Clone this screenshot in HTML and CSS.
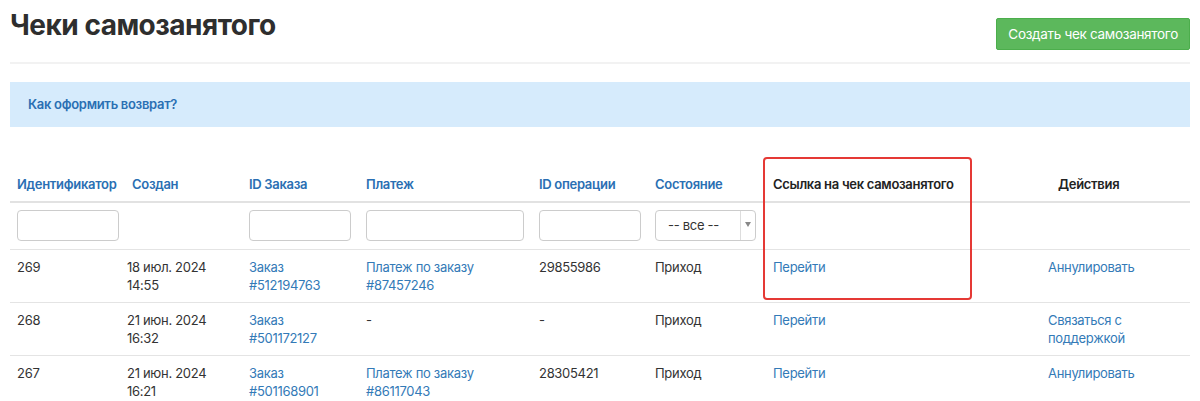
FILE: index.html
```html
<!DOCTYPE html>
<html lang="ru">
<head>
  <meta charset="UTF-8">
  <title>Чеки самозанятого</title>
  <link rel="stylesheet" href="styles.css">
</head>
<body>
  <div class="page">
    <div class="page-header">
      <h1>Чеки самозанятого</h1>
      <button class="btn-create">Создать чек самозанятого</button>
    </div>

    <div class="info-box">
      <a href="#">Как оформить возврат?</a>
    </div>

    <div class="table-wrap">
      <div class="highlight"></div>
      <table class="receipts">
        <colgroup>
          <col style="width:115px">
          <col style="width:117px">
          <col style="width:117px">
          <col style="width:173px">
          <col style="width:116px">
          <col style="width:118px">
          <col style="width:275px">
          <col>
        </colgroup>
        <thead>
          <tr>
            <th><a href="#">Идентификатор</a></th>
            <th><a href="#">Создан</a></th>
            <th><a href="#">ID Заказа</a></th>
            <th><a href="#">Платеж</a></th>
            <th><a href="#">ID операции</a></th>
            <th><a href="#">Состояние</a></th>
            <th>Ссылка на чек самозанятого</th>
            <th class="th-actions">Действия</th>
          </tr>
          <tr class="filters">
            <td><input type="text"></td>
            <td></td>
            <td><input type="text"></td>
            <td><input type="text" class="wide"></td>
            <td><input type="text"></td>
            <td>
              <div class="select">
                <span class="select-value">-- все --</span>
                <span class="select-arrow"></span>
              </div>
            </td>
            <td></td>
            <td></td>
          </tr>
        </thead>
        <tbody>
          <tr>
            <td>269</td>
            <td class="date">18 июл. 2024<br>14:55</td>
            <td><a href="#">Заказ<br>#512194763</a></td>
            <td><a href="#">Платеж по заказу<br>#87457246</a></td>
            <td>29855986</td>
            <td>Приход</td>
            <td><a href="#">Перейти</a></td>
            <td><a href="#">Аннулировать</a></td>
          </tr>
          <tr>
            <td>268</td>
            <td class="date">21 июн. 2024<br>16:32</td>
            <td><a href="#">Заказ<br>#501172127</a></td>
            <td>-</td>
            <td>-</td>
            <td>Приход</td>
            <td><a href="#">Перейти</a></td>
            <td><a href="#">Связаться с<br>поддержкой</a></td>
          </tr>
          <tr>
            <td>267</td>
            <td class="date">21 июн. 2024<br>16:21</td>
            <td><a href="#">Заказ<br>#501168901</a></td>
            <td><a href="#">Платеж по заказу<br>#86117043</a></td>
            <td>28305421</td>
            <td>Приход</td>
            <td><a href="#">Перейти</a></td>
            <td><a href="#">Аннулировать</a></td>
          </tr>
        </tbody>
      </table>
    </div>
  </div>
</body>
</html>
```

FILE: styles.css
```css
body {
  margin: 0;
  font-family: Inter, "Noto Sans", sans-serif;
  font-size: 13px;
  letter-spacing: -0.3px;
  color: #333;
  background-color: white;
}
a {
  color: #337ab7;
  text-decoration: none;
}
.page {
  padding: 8px 10px 0;
}
.page-header {
  display: flex;
  justify-content: space-between;
  align-items: flex-start;
  padding-bottom: 12px;
  border-bottom: 2px solid #f2f2f2;
}
.page-header h1 {
  margin: 0;
  font-size: 28px;
  line-height: 34px;
  font-weight: 700;
  color: #2e2e2e;
  letter-spacing: -0.5px;
}
.btn-create {
  margin-top: 10px;
  height: 32px;
  padding: 0 11px;
  border: 1px solid #4cae4c;
  border-radius: 2px;
  background-color: #5cb85c;
  color: white;
  font-family: inherit;
  font-size: 13.5px;
  letter-spacing: -0.3px;
  cursor: pointer;
}
.info-box {
  margin-top: 18px;
  padding: 14px 18px;
  line-height: 17px;
  background-color: #d6ebfc;
}
.info-box a {
  font-weight: 600;
  color: #2a6fb3;
}
.table-wrap {
  position: relative;
  margin-top: 40px;
}
.highlight {
  position: absolute;
  left: 753px;
  top: -10px;
  width: 205px;
  height: 139px;
  border: 2px solid #e53935;
  border-radius: 4px;
  pointer-events: none;
}
.receipts {
  width: 100%;
  table-layout: fixed;
  border-collapse: collapse;
}
.receipts th,
.receipts td {
  padding: 8px 7px;
  line-height: 18px;
  text-align: left;
  vertical-align: top;
}
.receipts th {
  font-weight: 600;
  color: #222;
  border-bottom: 2px solid #e2e2e2;
  white-space: nowrap;
}
.receipts th a {
  color: #2a6fb3;
}
.receipts .th-actions {
  padding-left: 17px;
}
.receipts tbody td {
  border-top: 1px solid #e4e4e4;
}
.receipts tbody td.date {
  padding-left: 2px;
}
.receipts .filters td {
  padding-top: 7px;
}
.filters input {
  display: block;
  box-sizing: border-box;
  width: 102px;
  height: 31px;
  border: 1px solid #ccc;
  border-radius: 4px;
}
.filters input.wide {
  width: 158px;
}
.select {
  display: flex;
  box-sizing: border-box;
  width: 101px;
  height: 31px;
  border: 1px solid #ccc;
  border-radius: 4px;
}
.select-value {
  flex: 1;
  padding-left: 12px;
  line-height: 29px;
  color: #333;
}
.select-arrow {
  position: relative;
  width: 14px;
  border-left: 1px solid #ddd;
}
.select-arrow::after {
  content: "";
  position: absolute;
  left: 4px;
  top: 11px;
  border-left: 3px solid transparent;
  border-right: 3px solid transparent;
  border-top: 5px solid #888;
}
```
